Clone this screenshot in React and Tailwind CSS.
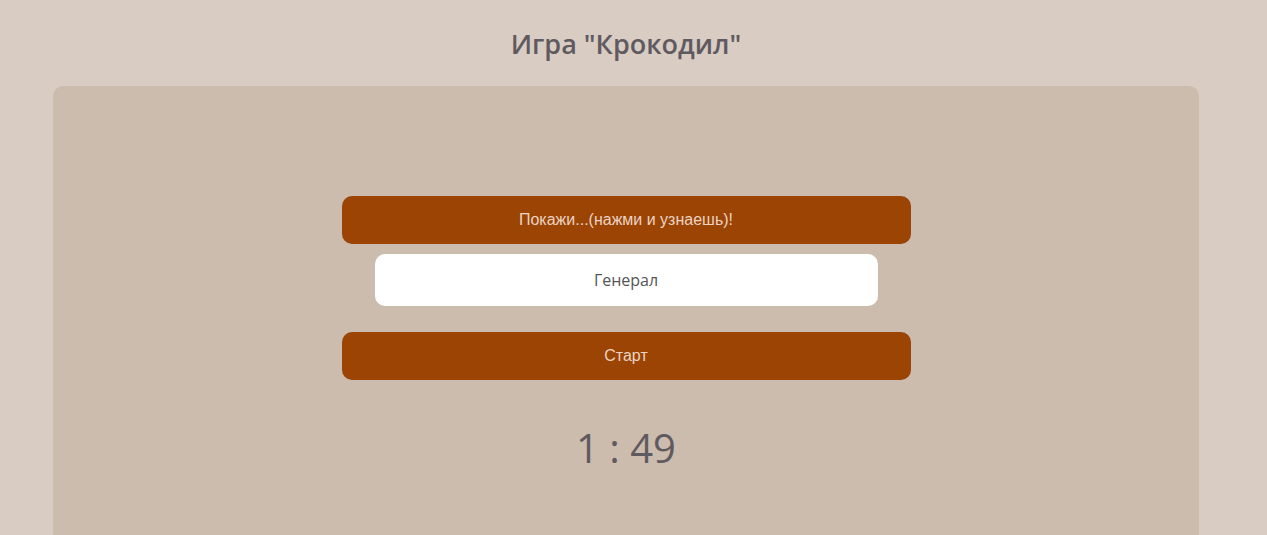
export default function App() {
  return (
    <div className="h-[535px] overflow-hidden bg-[#d9ccc3]">
      <div className="w-[1252px] px-[53px]">
        <h1 className="pt-[26px] h-[86px] text-center text-[27px] leading-[36px] font-semibold text-[#5f5a60] font-['Open_Sans',sans-serif]">
          Игра "Крокодил"
        </h1>
        <div className="rounded-[10px] bg-[#ccbcae] h-[500px] pt-[110px] flex flex-col items-center">
          <button className="w-[569px] h-[48px] rounded-[10px] bg-[#9b4403] text-[16px] text-[#ecd3c3] font-['Liberation_Sans',Arial,sans-serif]">
            Покажи...(нажми и узнаешь)!
          </button>
          <div className="mt-[10px] w-[503px] h-[52px] rounded-[10px] bg-white flex items-center justify-center text-[16px] text-[#555555] font-['Open_Sans',sans-serif]">
            Генерал
          </div>
          <button className="mt-[26px] w-[569px] h-[48px] rounded-[10px] bg-[#9b4403] text-[16px] text-[#ecd3c3] font-['Liberation_Sans',Arial,sans-serif]">
            Старт
          </button>
          <div className="mt-[40px] text-[40px] leading-[56px] text-[#5f5a60] font-['Open_Sans',sans-serif]">
            1 : 49
          </div>
        </div>
      </div>
    </div>
  );
}
